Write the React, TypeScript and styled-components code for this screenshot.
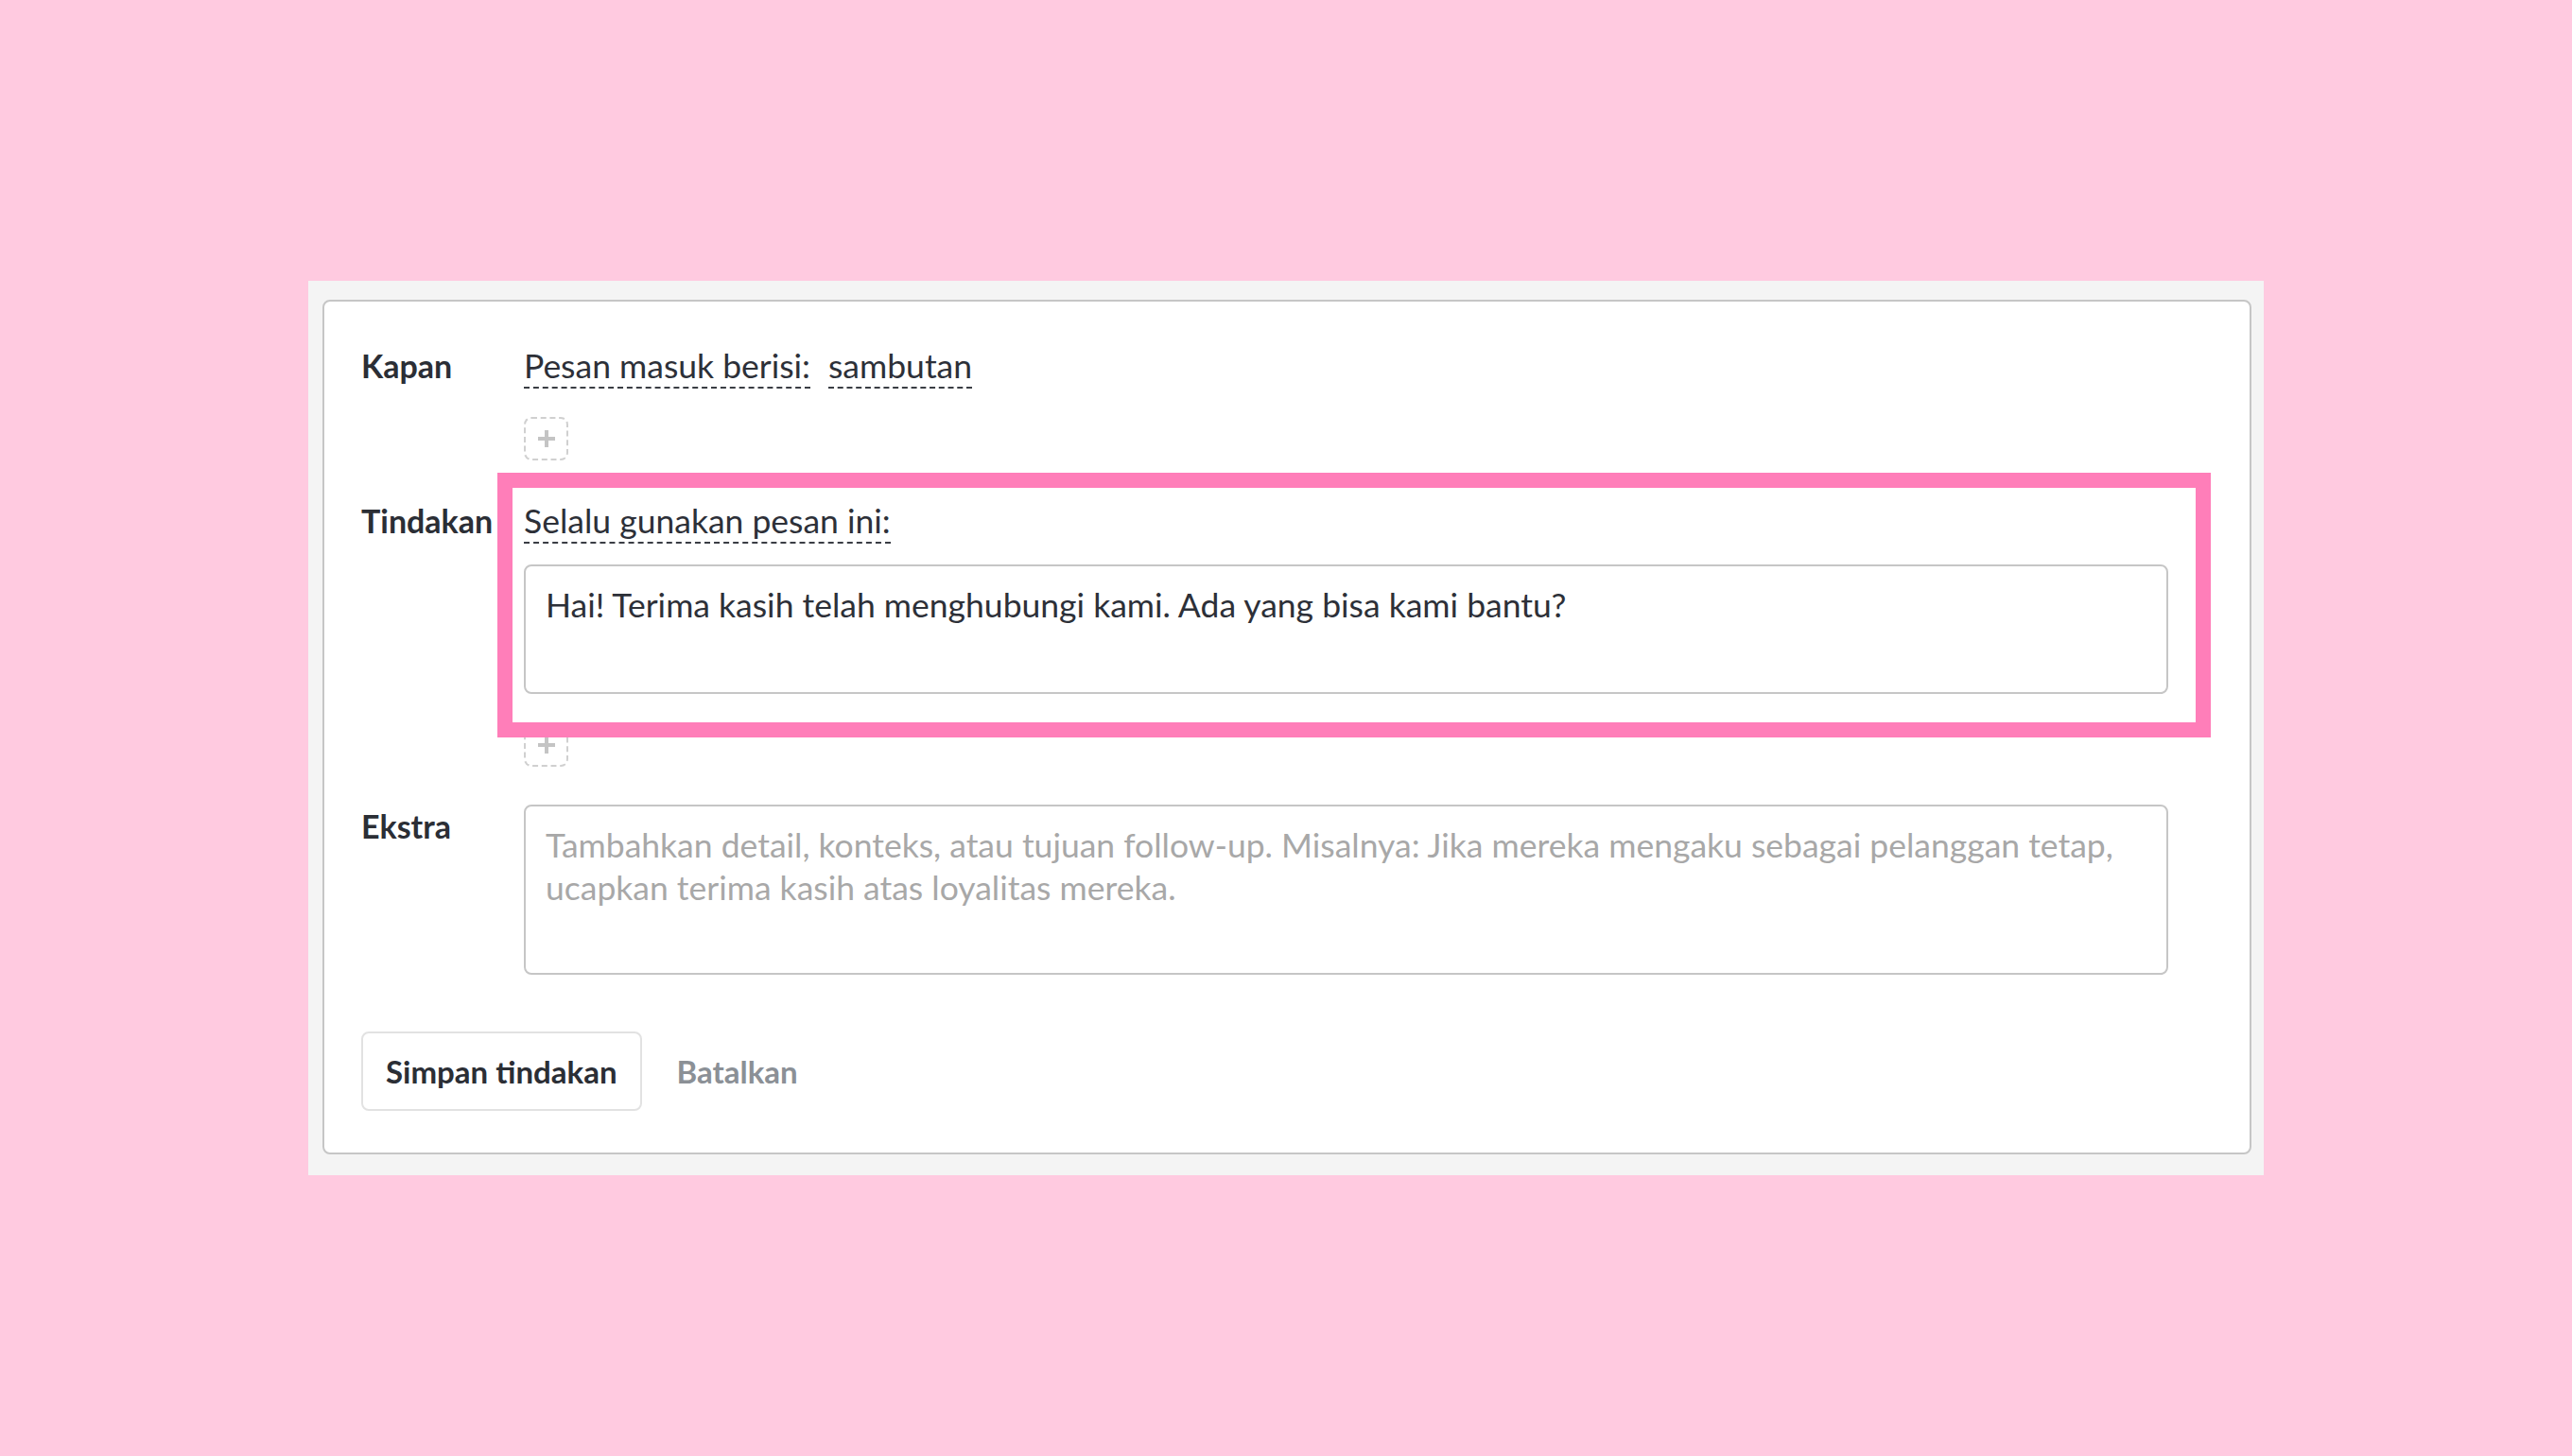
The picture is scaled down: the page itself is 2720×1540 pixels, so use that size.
import styled, { createGlobalStyle } from "styled-components";

const GlobalStyle = createGlobalStyle`
  html, body {
    margin: 0;
    padding: 0;
  }
  body {
    background: #ffcae0;
    font-family: Lato, "Open Sans", sans-serif;
    color: #2d3038;
  }
`;

const App = () => {
  return (
    <>
      <GlobalStyle />
      <Page>
        <Panel>
          <Card>
            <Section>
              <Label>Kapan</Label>
              <Body>
                <TriggerLine>
                  <Trigger>Pesan masuk berisi:</Trigger>
                  <Trigger>sambutan</Trigger>
                </TriggerLine>
                <AddButton $top={30} aria-label="Tambah kondisi">
                  <PlusIcon />
                </AddButton>
              </Body>
            </Section>

            <Section $top={41}>
              <Label>Tindakan</Label>
              <Body>
                <TriggerLine>
                  <Trigger>Selalu gunakan pesan ini:</Trigger>
                </TriggerLine>
                <TextBox
                  $top={22}
                  $height={137}
                  readOnly
                  defaultValue="Hai! Terima kasih telah menghubungi kami. Ada yang bisa kami bantu?"
                />
                <AddButton $top={31} aria-label="Tambah tindakan">
                  <PlusIcon />
                </AddButton>
                <Highlight />
              </Body>
            </Section>

            <Section $top={40}>
              <Label>Ekstra</Label>
              <Body>
                <TextBox
                  $height={180}
                  placeholder="Tambahkan detail, konteks, atau tujuan follow-up. Misalnya: Jika mereka mengaku sebagai pelanggan tetap, ucapkan terima kasih atas loyalitas mereka."
                />
              </Body>
            </Section>

            <Actions>
              <SaveButton>Simpan tindakan</SaveButton>
              <CancelButton>Batalkan</CancelButton>
            </Actions>
          </Card>
        </Panel>
      </Page>
    </>
  );
};

const PlusIcon = () => (
  <svg width="20" height="20" viewBox="0 0 20 20">
    <path d="M10 1v18M1 10h18" stroke="#c4c4c4" strokeWidth="4" fill="none" />
  </svg>
);

const Page = styled.div`
  min-height: 100vh;
  display: flex;
  align-items: center;
  justify-content: center;
`;

const Panel = styled.div`
  width: 2068px;
  box-sizing: border-box;
  padding: 20px 13px 22px 15px;
  background: #f4f4f4;
`;

const Card = styled.div`
  background: #fff;
  border: 2px solid #c6c6c6;
  border-radius: 8px;
  padding: 45px 86px 44px 39px;
  display: flex;
  flex-direction: column;
`;

const Section = styled.div<{ $top?: number }>`
  display: grid;
  grid-template-columns: 172px 1fr;
  margin-top: ${({ $top }) => $top ?? 0}px;
`;

const Label = styled.div`
  font-size: 34px;
  line-height: 45px;
  font-weight: 700;
  color: #2b2e35;
`;

const Body = styled.div`
  position: relative;
  display: flex;
  flex-direction: column;
  align-items: flex-start;
`;

const TriggerLine = styled.div`
  display: flex;
  gap: 19px;
`;

const Trigger = styled.span`
  display: inline-block;
  font-size: 35.5px;
  line-height: 45px;
  border-bottom: 2px dashed #3a3d44;
  cursor: pointer;
`;

const AddButton = styled.button<{ $top: number }>`
  margin-top: ${({ $top }) => $top}px;
  width: 47px;
  height: 46px;
  box-sizing: border-box;
  border: 2px dashed #d0d0d0;
  border-radius: 8px;
  background: #fff;
  padding: 0;
  display: flex;
  align-items: center;
  justify-content: center;
`;

const TextBox = styled.textarea<{ $top?: number; $height: number }>`
  margin-top: ${({ $top }) => $top ?? 0}px;
  width: 100%;
  height: ${({ $height }) => $height}px;
  box-sizing: border-box;
  border: 2px solid #c6c6c6;
  border-radius: 8px;
  padding: 18px 21px;
  font-family: inherit;
  font-size: 35.5px;
  line-height: 45px;
  color: #2d3038;
  resize: none;
  outline: none;

  &::placeholder {
    color: #a8a8a8;
  }
`;

const Highlight = styled.div`
  position: absolute;
  left: -28px;
  top: -28px;
  width: 1812px;
  height: 280px;
  box-sizing: border-box;
  border: 16px solid #ff7eb9;
  pointer-events: none;
  z-index: 2;
`;

const Actions = styled.div`
  margin-top: 60px;
  display: flex;
  align-items: center;
  gap: 37px;
`;

const SaveButton = styled.button`
  height: 84px;
  padding: 0 24px;
  border: 2px solid #e2e2e2;
  border-radius: 8px;
  background: #fff;
  font-family: inherit;
  font-size: 33px;
  font-weight: 700;
  color: #2b2e35;
`;

const CancelButton = styled.button`
  border: none;
  background: none;
  padding: 0;
  font-family: inherit;
  font-size: 33px;
  font-weight: 700;
  color: #8b9096;
`;

export default App;
